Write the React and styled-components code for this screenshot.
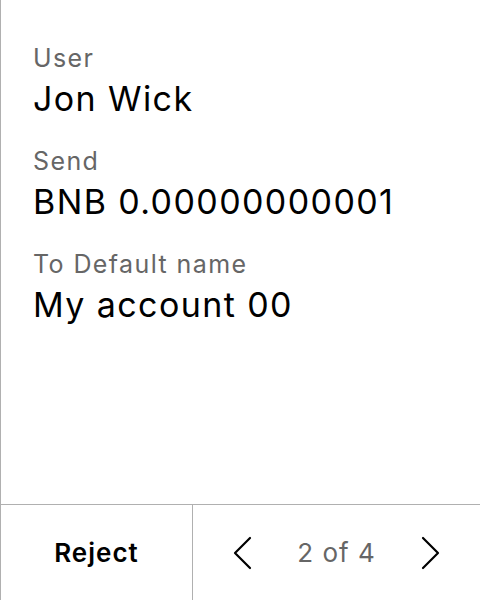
import React from "react";
import styled, { createGlobalStyle } from "styled-components";

const Global = createGlobalStyle`
  html, body { margin: 0; padding: 0; background: #fff; }
  body { font-family: Inter, "Noto Sans", sans-serif; }
`;

const Screen = styled.div`
  width: 480px;
  height: 600px;
  box-sizing: border-box;
  border-left: 1px solid #b0b0b0;
  display: flex;
  flex-direction: column;
  background: #fff;
`;

const Content = styled.div`
  flex: 1;
  padding: 43px 32px 0 32px;
  display: flex;
  flex-direction: column;
  gap: 27px;
`;

const Field = styled.div`
  display: flex;
  flex-direction: column;
  gap: 6px;
`;

const Label = styled.div`
  font-size: 25px;
  line-height: 30px;
  letter-spacing: 1.4px;
  color: #666;
`;

const Value = styled.div`
  font-size: 34px;
  line-height: 40px;
  letter-spacing: 1.4px;
  color: #000;
`;

const Footer = styled.div`
  box-sizing: border-box;
  height: 96px;
  border-top: 1px solid #b0b0b0;
  display: grid;
  grid-template-columns: 192px 1fr;
`;

const RejectButton = styled.button`
  border: none;
  border-right: 1px solid #b0b0b0;
  background: transparent;
  font-family: inherit;
  font-size: 26px;
  font-weight: 600;
  letter-spacing: 1px;
  color: #000;
  padding: 0;
`;

const Pager = styled.div`
  display: flex;
  align-items: center;
  justify-content: center;
  gap: 45px;
`;

const Arrow = styled.button`
  border: none;
  background: transparent;
  padding: 0;
  display: flex;
  width: 20px;
  height: 34px;
`;

const PageText = styled.span`
  font-size: 26px;
  letter-spacing: 1px;
  color: #666;
`;

const Chevron = ({ dir }) => (
  <svg width="20" height="34" viewBox="0 0 20 34" fill="none">
    <path
      d={dir === "left" ? "M18 2 L3 17 L18 32" : "M2 2 L17 17 L2 32"}
      stroke="#000"
      strokeWidth="2.2"
      strokeLinecap="round"
      strokeLinejoin="round"
    />
  </svg>
);

const fields = [
  { label: "User", value: "Jon Wick" },
  { label: "Send", value: "BNB 0.00000000001" },
  { label: "To Default name", value: "My account 00" },
];

export default function App() {
  return (
    <>
      <Global />
      <Screen>
        <Content>
          {fields.map((f) => (
            <Field key={f.label}>
              <Label>{f.label}</Label>
              <Value>{f.value}</Value>
            </Field>
          ))}
        </Content>
        <Footer>
          <RejectButton>Reject</RejectButton>
          <Pager>
            <Arrow aria-label="Previous"><Chevron dir="left" /></Arrow>
            <PageText>2 of 4</PageText>
            <Arrow aria-label="Next"><Chevron dir="right" /></Arrow>
          </Pager>
        </Footer>
      </Screen>
    </>
  );
}
